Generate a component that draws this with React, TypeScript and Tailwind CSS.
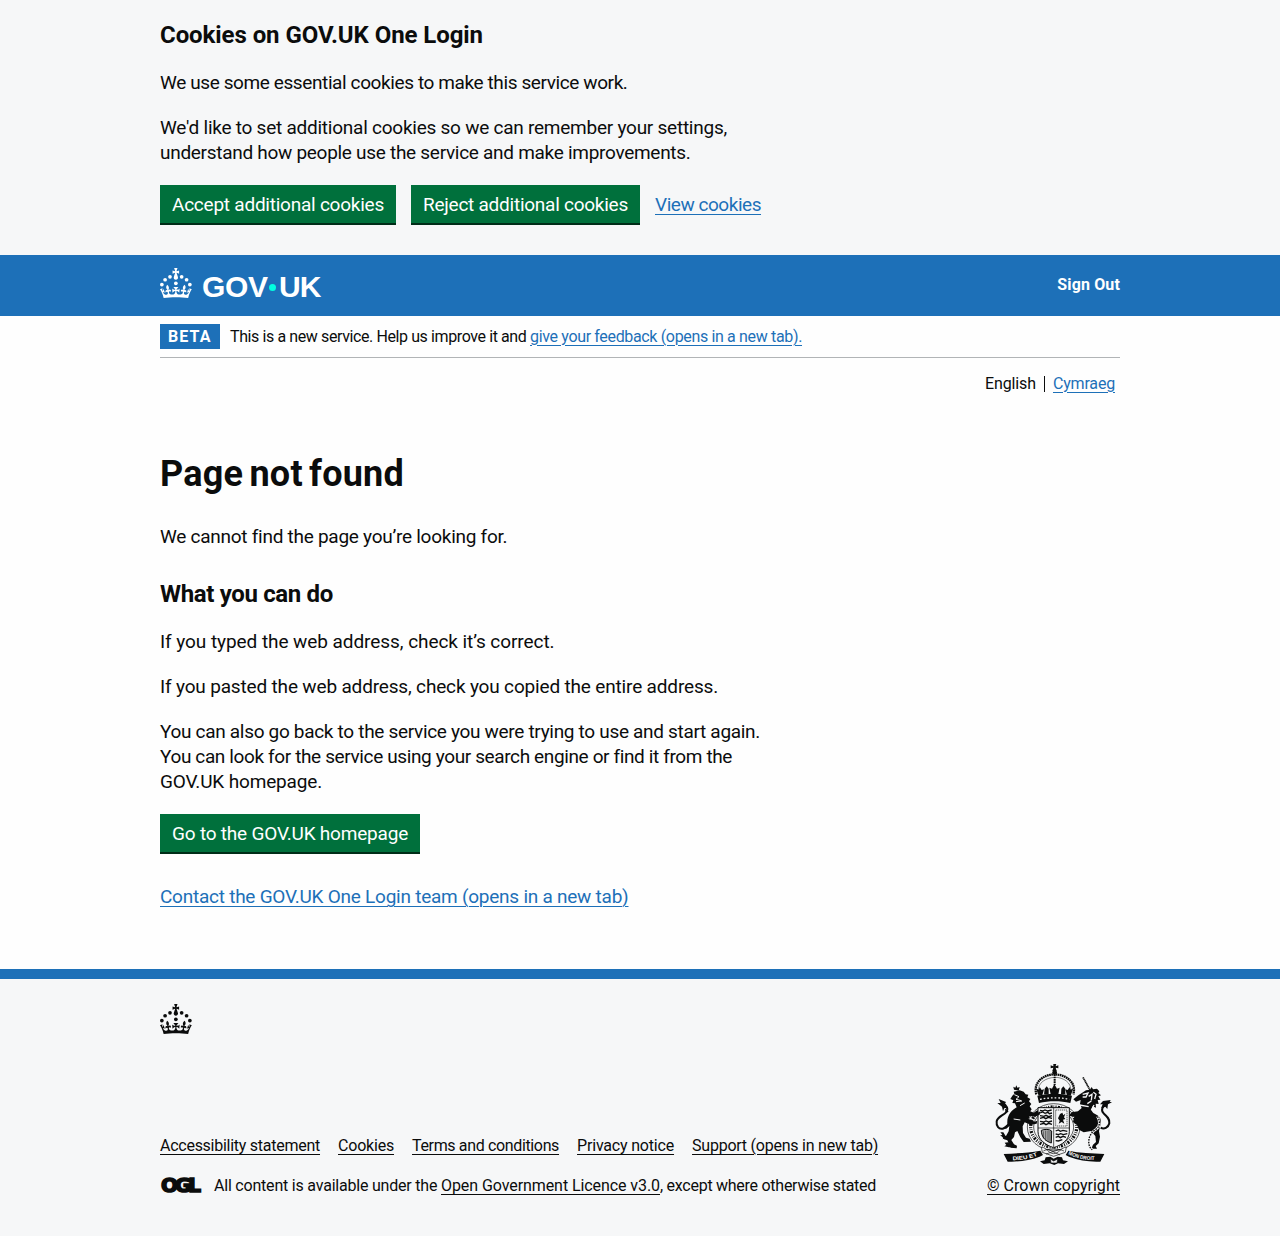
import type { ReactNode } from "react";

function Crown() {
  return (
    <g fill="currentColor">
      <circle cx="20" cy="17.6" r="3.7" />
      <circle cx="10.2" cy="23.5" r="3.7" />
      <circle cx="3.7" cy="33.2" r="3.7" />
      <circle cx="31.7" cy="30.6" r="3.7" />
      <circle cx="43.3" cy="17.6" r="3.7" />
      <circle cx="53.2" cy="23.5" r="3.7" />
      <circle cx="59.7" cy="33.2" r="3.7" />
      <path d="M33.1,9.8c.2-.1.3-.3.5-.5l4.6,2.4v-6.8l-4.6,1.5c-.1-.2-.3-.3-.5-.5l1.9-5.9h-6.7l1.9,5.9c-.2.1-.3.3-.5.5l-4.6-1.5v6.8l4.6-2.4c.1.2.3.3.5.5l-2.6,8c-.9,2.8,1.2,5.7,4.1,5.7h0c3,0,5.1-2.9,4.1-5.7l-2.6-8ZM37,37.9s-3.4,3.8-4.1,6.1c2.2,0,4.2-.5,6.4-2.8l-.7,8.5c-2-2.8-4.4-4.1-5.7-3.8.1,3.1.5,6.7,5.8,7.2,3.7.3,6.7-1.5,7-3.8.4-2.6-2-4.3-3.7-1.6-1.4-4.5,2.4-6.1,4.9-3.2-1.9-4.5-1.8-7.7,2.4-10.9,3,4,2.6,7.3-1.2,11.1,2.4-1.3,6.2,0,4,4.6-1.2-2.8-3.7-2.2-4.2.2-.3,1.7.7,3.7,3,4.2,1.9.3,4.7-.9,7-5.9-1.3,0-2.4.7-3.9,1.7l2.4-8c.6,2.3,1.4,3.7,2.2,4.5.6-1.6.5-2.8,0-5.3l5,1.8c-2.6,3.6-5.2,8.7-7.3,17.5-7.4-1.1-15.7-1.7-24.5-1.7h0c-8.8,0-17.1.6-24.5,1.7-2.1-8.9-4.7-13.9-7.3-17.5l5-1.8c-.5,2.5-.6,3.7,0,5.3.8-.8,1.6-2.3,2.2-4.5l2.4,8c-1.5-1-2.6-1.7-3.9-1.7,2.3,5,5.2,6.2,7,5.9,2.3-.4,3.3-2.4,3-4.2-.5-2.4-3-3.1-4.2-.2-2.2-4.6,1.6-6,4-4.6-3.7-3.7-4.2-7.1-1.2-11.1,4.2,3.2,4.3,6.4,2.4,10.9,2.5-2.8,6.3-1.3,4.9,3.2-1.8-2.7-4.1-1-3.7,1.6.3,2.3,3.3,4.1,7,3.8,5.4-.5,5.7-4.2,5.8-7.2-1.3-.2-3.7,1-5.7,3.8l-.7-8.5c2.2,2.3,4.2,2.7,6.4,2.8-.7-2.3-4.1-6.1-4.1-6.1h10.6,0Z" />
    </g>
  );
}

function Crest() {
  return (
    <svg viewBox="33 27 375 306" className="h-[102px] w-[125px]" fill="none" stroke="#0b0c0c" aria-hidden="true">
      {/* crown */}
      <g fill="#0b0c0c" stroke="none">
        <path d="M220 26h9l-2 8 8-3v9l-8-2 3 10h-13l3-10-8 2v-9l8 3z" />
        <circle cx="224" cy="52" r="7" />
        <path d="M172 122c34-8 70-8 104 0l-5 22c-30-7-64-7-94 0z" />
        <path d="M176 122l-8-22 8 4 3-8 6 9 7-2-5 18zM272 122l8-22-8 4-3-8-6 9-7-2 5 18zM212 118l-4-20 8 3 7-14 8 14 8-3-4 20zM192 118l2-17 6-7 6 7 0 17zM243 118l1-17 6-7 6 7 0 17z" />
      </g>
      <path d="M169 118C158 78 196 58 224 58s67 20 56 60" strokeWidth="7" strokeDasharray="5 1.5" />
      <path d="M176 108C172 84 198 68 224 67s52 17 48 41" strokeWidth="1.5" />
      <path d="M224 58v32" strokeWidth="6" strokeDasharray="5 2" />
      <path d="M180 133c30-6 60-6 88 0" stroke="#f3f3f3" strokeWidth="4" strokeDasharray="5 6" />
      {/* garter and shield */}
      <ellipse cx="221" cy="216" rx="79" ry="70" strokeWidth="2" fill="#f6f6f7" />
      <ellipse cx="221" cy="216" rx="69" ry="60" strokeWidth="10" strokeDasharray="3 4 6 3 2 4" />
      <ellipse cx="221" cy="216" rx="60" ry="53" strokeWidth="2" />
      <path d="M174 158h94v72c0 24-22 40-47 48-25-8-47-24-47-48z" fill="#f6f6f7" strokeWidth="3" />
      <path d="M221 158v118M174 219h94" strokeWidth="2" />
      <path d="M180 166l8 2 7-3 8 3 12-3M180 174l8-3 7 4 9-3 4 4 8-2M180 182l12 2 6-3 8 4 10-3M180 190l11-3 6 4 8-4 11 3M180 199l11 2 7-3 8 3 10-3M180 208l12-3 6 4 8-4 10 3M227 228l8-3 6 4 8-3 13 3M227 237l8 2 7-3 8 3 12-3M227 247l8-3 6 4 8-4 9 3M227 257l8 1 12-4" strokeWidth="4" />
      <rect x="227" y="165" width="34" height="48" strokeWidth="2" strokeDasharray="4 2" />
      <path d="M236 206l3-9-5-7 6-13 7-4 3 8 6-5-4 11 4 5-7 2 4 12-8-5z" fill="#0b0c0c" stroke="none" />
      <path d="M184 226c9-4 25-4 31 2l-1 36c-17-5-30-17-30-38z" fill="#aaa" strokeWidth="3" />
      <path d="M190 229v22M197 227v30M204 227v34M210 228v34" strokeWidth="1.5" />
      {/* lion */}
      <g fill="#0b0c0c" stroke="none">
        <path d="M102 104l-2-9 6 3 3-7 3 7 7-2-3 11z" />
        <path d="M97 122l6-6-2-6 18-4 12 4 6 8 8 1-3 8 9 5-4 7 7 8-5 7 6 9-4 6 10 4 12-8-2 10 10-6-2 10-14 6-16-2-3 9 18 8 8-3-2 9-18 3-18-7-6 12 1 20 9 14 11 3 4 9-22 1-10-14-9-19-7 4-3 14-8 9 8 13 9 4-1 8-18-2-10-22-10-3-7-10 13 0 8-14 2-16-9 8-9 0 12-14c-2-26 12-40 28-50l-5-12-8-1 3-8-9-4z" />
        <path d="M70 232l-9 0 6 7-7 3 12 4-4 7 12-5zM84 262l-10 1 5 7-6 4 14 3 14 0-8-13z" />
        <path d="M56 132l22 9-4 6 10 12-11 0-4 10-3-14-14-11 10 0zM78 174l-4-14 12 10z" />
      </g>
      <path d="M67 143c14 8 20 20 10 30-11 10-24 13-27 26-2 14 7 25 18 22 8-2 12-9 20-12" strokeWidth="6" />
      <path d="M103 119l14 6-9 8 16 4M108 140l18-2M120 152l14-8M101 192l20 3" stroke="#f6f6f7" strokeWidth="3" />
      {/* unicorn */}
      <path d="M309 67l21 38" strokeWidth="5" strokeDasharray="4 1" />
      <g fill="#0b0c0c" stroke="none">
        <path d="M302 116l16-10 12-2 5-8 4 7 12-2 7 8-3 5 8 7-8 3 6 10-8 1 3 12-9-1 1 12-10-4c-5 8-4 14 2 20l12 7c12 8 14 20 8 34l-3 14 3 16-4 20-9 8 4 8-17 0 5-12 9-8-2-18-13-15-22 4-14-8-6-14-12-9 4-16-15-3 6-10 20-3 11-10-5-12 2-12-14 5-8-7 15-12z" />
        <path d="M392 135l-23 3-9 10 8 0-5 12 13-5 6 7 2-14 12-6-7-2z" />
      </g>
      <path d="M380 149c-14 5-18 17-9 26 10 9 19 17 17 30-3 13-16 19-26 13" strokeWidth="6" />
      <path d="M308 118l16-4-6 12-10 0M326 124l10-6-2 18M340 112l8 6-4 14M298 150l28 5M322 146l12-8M342 150l-8 16" stroke="#f6f6f7" strokeWidth="4" />
      <path d="M352 184c10 14 7 32-3 38-12 8-20 18-22 30s0 26 10 32" stroke="#f6f6f7" strokeWidth="8" />
      <path d="M352 184c10 14 7 32-3 38-12 8-20 18-22 30s0 26 10 32" strokeWidth="4" strokeDasharray="5 3" />
      {/* motto ribbon and compartment */}
      <path d="M184 276c16 2 22 20 37 20s22-18 38-20l-3 16-35 12-34-12z" fill="#f6f6f7" strokeWidth="2" />
      <path d="M190 288c12-8 46-8 62 0M198 297l42-14M240 300l-38-18" strokeWidth="2" />
      <path d="M71 297c38-2 74-3 110-10l8 13-10 5c-28 10-52 14-84 15l-12 0z" fill="#0b0c0c" stroke="none" />
      <path d="M373 297c-38-2-74-3-108-10l-8 13 10 5c28 10 52 14 82 15l12 0z" fill="#0b0c0c" stroke="none" />
      <path id="motto-left" d="M98 316c28-1 54-5 84-18" stroke="none" />
      <path id="motto-right" d="M264 298c28 13 52 17 84 18" stroke="none" />
      <g fill="#fff" stroke="none" className="font-['Liberation_Sans'] text-[16px] font-bold">
        <text textLength="76" lengthAdjust="spacingAndGlyphs"><textPath href="#motto-left">DIEU ET</textPath></text>
        <text textLength="82" lengthAdjust="spacingAndGlyphs"><textPath href="#motto-right">MON DROIT</textPath></text>
      </g>
      <path d="M180 319l14-3 3-9 14-2 10 6 12-6 13 2 3 9 15 3-12 8-18-2-11 5-14-5-18 2z" fill="#0b0c0c" stroke="none" />
      <path d="M211 312l10 6 12-6-2 12-18 0z" fill="#f6f6f7" strokeWidth="2" />
    </svg>
  );
}

function Button({ children }: { children: ReactNode }) {
  return (
    <button className="h-[38px] bg-[#00703c] px-3 pt-px whitespace-nowrap text-white shadow-[0_2px_0_#002d18]">
      {children}
    </button>
  );
}

const link = "underline decoration-1 underline-offset-[3px]";

export default function App() {
  return (
    <div className="min-h-[1236px] bg-[#fefefe] font-['Roboto',sans-serif] text-[19px] leading-[25px] whitespace-nowrap text-[#0b0c0c]">
      <section className="h-[255px] bg-[#f6f7f8] pt-5">
        <div className="mx-auto w-[960px]">
          <h2 className="mb-5 text-2xl leading-[30px] font-bold tracking-[-0.072px]">Cookies on GOV.UK One Login</h2>
          <p className="mb-5 tracking-[-0.395px]">We use some essential cookies to make this service work.</p>
          <p className="mb-5">
            <span className="block tracking-[-0.243px]">We'd like to set additional cookies so we can remember your settings,</span>
            <span className="block tracking-[-0.288px]">understand how people use the service and make improvements.</span>
          </p>
          <div className="flex items-center gap-[15px]">
            <Button><span className="tracking-[-0.237px]">Accept additional cookies</span></Button>
            <Button><span className="tracking-[-0.25px]">Reject additional cookies</span></Button>
            <a className={`${link} tracking-[-0.461px] text-[#1d70b8]`}>View cookies</a>
          </div>
        </div>
      </section>

      <header className="h-[61px] bg-[#1d70b8] text-white">
        <div className="mx-auto flex h-[60px] w-[960px] items-center justify-between">
          <div className="flex h-[34px] items-start">
            <svg viewBox="0 0 64 60" className="mr-[10px] h-[30px] w-8"><Crown /></svg>
            <span className="flex items-center pt-[4px] font-['Liberation_Sans'] text-[30px] leading-none font-bold">
              <span className="w-[67px] tracking-[-0.3px]">GOV</span>
              <span className="mr-[3px] size-[7px] rounded-full bg-[#00ffe0]" />
              <span className="tracking-[-0.8px]">UK</span>
            </span>
          </div>
          <a className="text-base leading-5 font-bold tracking-[0.14px]">Sign Out</a>
        </div>
      </header>

      <div className="mx-auto flex h-[42px] w-[960px] items-center border-b border-[#b1b4b6] text-base leading-5">
        <strong className="mr-[10px] flex h-[25px] w-[60px] items-center bg-[#1d70b8] pl-2 tracking-[1.1px] text-white">BETA</strong>
        <span className="whitespace-pre tracking-[-0.397px]">This is a new service. Help us improve it and </span>
        <a className={`${link} tracking-[-0.345px] text-[#1d70b8]`}>give your feedback (opens in a new tab).</a>
      </div>

      <nav className="mx-auto flex h-[53px] w-[960px] items-center justify-end pr-[5px] pb-[2px] text-base leading-5">
        <span className="mr-2 tracking-[-0.109px]">English</span>
        <span className="mr-2 h-4 w-px bg-[#0b0c0c]" />
        <a className={`${link} tracking-[-0.185px] text-[#1d70b8]`}>Cymraeg</a>
      </nav>

      <main className="mx-auto h-[558px] w-[960px] pt-[43px]">
        <h1 className="mb-[30px] text-4xl leading-10 font-bold tracking-[0.24px] [word-spacing:-3px]">Page not found</h1>
        <p className="mb-[30px] tracking-[-0.265px]">We cannot find the page you’re looking for.</p>
        <h2 className="mb-5 text-2xl leading-[30px] font-bold tracking-[-0.337px]">What you can do</h2>
        <p className="mb-5 tracking-[-0.066px]">If you typed the web address, check it’s correct.</p>
        <p className="mb-5 tracking-[-0.166px]">If you pasted the web address, check you copied the entire address.</p>
        <p className="mb-5">
          <span className="block tracking-[-0.312px]">You can also go back to the service you were trying to use and start again.</span>
          <span className="block tracking-[-0.375px]">You can look for the service using your search engine or find it from the</span>
          <span className="block tracking-[-0.161px]">GOV.UK homepage.</span>
        </p>
        <div className="mb-8 flex"><Button><span className="tracking-[-0.204px]">Go to the GOV.UK homepage</span></Button></div>
        <a className={`${link} tracking-[-0.244px] text-[#1d70b8]`}>Contact the GOV.UK One Login team (opens in a new tab)</a>
      </main>

      <footer className="h-[267px] border-t-10 border-[#1d70b8] bg-[#f6f7f8] pt-[25px] text-base leading-5">
        <div className="mx-auto w-[960px]">
          <svg viewBox="0 0 64 60" className="mb-[30px] h-[30px] w-8"><Crown /></svg>
          <div className="flex items-end justify-between">
            <div>
              <div className="mb-5 flex gap-[18px]">
                <a className={`${link} tracking-[-0.261px]`}>Accessibility statement</a>
                <a className={`${link} tracking-[-0.201px]`}>Cookies</a>
                <a className={`${link} tracking-[-0.353px]`}>Terms and conditions</a>
                <a className={`${link} tracking-[-0.186px]`}>Privacy notice</a>
                <a className={`${link} tracking-[-0.233px]`}>Support (opens in new tab)</a>
              </div>
              <div className="flex items-center">
                <span className="mr-[13px] h-5 w-[41px] pt-px pl-px font-['DejaVu_Sans'] text-[20px] leading-[16px] font-bold tracking-[-3.1px] [-webkit-text-stroke:1.6px_#0b0c0c]">OGL</span>
                <span className="whitespace-pre tracking-[-0.205px]">All content is available under the </span>
                <a className={`${link} tracking-[-0.076px]`}>Open Government Licence v3.0</a>
                <span className="tracking-[-0.266px]">, except where otherwise stated</span>
              </div>
            </div>
            <div className="flex flex-col items-center">
              <Crest />
              <a className={`${link} mt-[10px] tracking-[0.03px]`}>© Crown copyright</a>
            </div>
          </div>
        </div>
      </footer>
    </div>
  );
}
